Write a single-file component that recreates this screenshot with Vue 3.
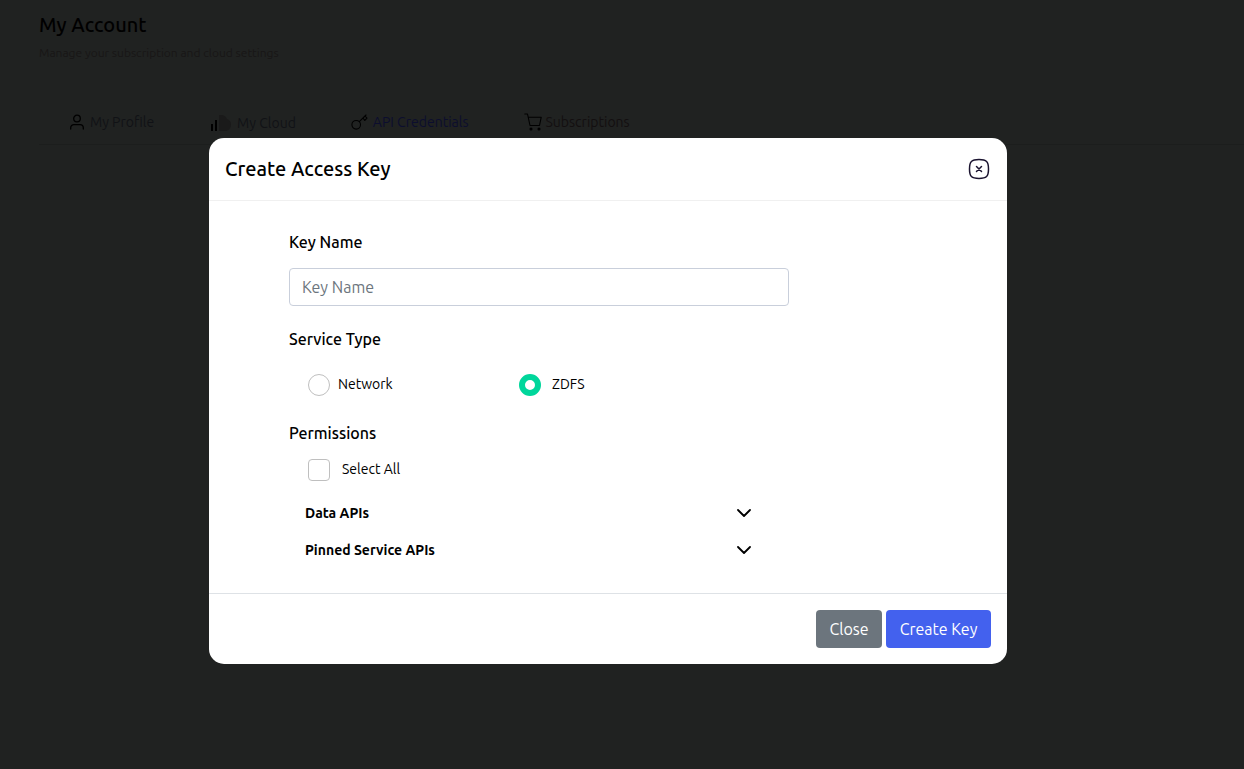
<script setup>
import { ref } from 'vue'

const tabs = [
  { id: 'profile', label: 'My Profile' },
  { id: 'cloud', label: 'My Cloud' },
  { id: 'api', label: 'API Credentials' },
  { id: 'subs', label: 'Subscriptions' },
]
const groups = ['Data APIs', 'Pinned Service APIs']
const keyName = ref('')
const service = ref('zdfs')
const selectAll = ref(false)
</script>

<template>
  <div class="page">
    <header class="intro">
      <h1>My Account</h1>
      <p>Manage your subscription and cloud settings</p>
    </header>
    <nav class="tabs">
      <a v-for="tab in tabs" :key="tab.id" href="#" class="tab" :class="tab.id">
        <svg v-if="tab.id === 'profile'" width="16" height="16" viewBox="0 0 16 16" fill="none" stroke="currentColor" stroke-width="1.3" stroke-linecap="round">
          <circle cx="8" cy="4.5" r="3.3" />
          <path d="M1.7 15v-1.200a3.200 3.200 0 0 1 3.200-3.200h6.200a3.200 3.200 0 0 1 3.200 3.200V15" />
        </svg>
        <svg v-else-if="tab.id === 'cloud'" width="22" height="18" viewBox="0 0 22 18">
          <path d="M9 1c5-.5 7 1.500 8 4 3 1 4.500 3.500 4 6.500S18.500 17 15 17H9z" fill="#1a1a1a" />
          <path d="M1 10h2v7H1zM5 6h2v11H5z" fill="currentColor" />
        </svg>
        <svg v-else-if="tab.id === 'api'" width="17" height="16" viewBox="0 0 17 16" fill="none" stroke="currentColor" stroke-width="1.1" stroke-linecap="round" stroke-linejoin="round">
          <circle cx="5.200" cy="10.800" r="4.300" />
          <path d="M8.300 7.700 15 1M12 4l1.700 2.500L16 4.200 14 2" />
        </svg>
        <svg v-else width="18" height="18" viewBox="0 0 18 18" fill="none" stroke="currentColor" stroke-width="1.1" stroke-linecap="round" stroke-linejoin="round">
          <path d="M.8 1h2.700L6 12.500h9.500l1.700-8.200H4.300" />
          <circle cx="7" cy="16" r="1" fill="currentColor" />
          <circle cx="15" cy="16" r="1" fill="currentColor" />
        </svg>
        <span>{{ tab.label }}</span>
      </a>
    </nav>

    <div class="overlay">
      <form class="modal" role="dialog" aria-labelledby="dialog-title" @submit.prevent>
        <div class="head">
          <h2 id="dialog-title">Create Access Key</h2>
          <button type="button" class="dismiss" aria-label="Close dialog">
            <svg width="22" height="22" viewBox="0 0 22 22" fill="none" stroke="#1b1430" stroke-width="1.5" stroke-linecap="round">
              <path d="M11 1.500c7.500 0 9.500 2 9.500 9.500s-2 9.500-9.500 9.500-9.500-2-9.500-9.500 2-9.500 9.500-9.500z" />
              <path d="m8.500 8.500 5 5m0-5-5 5" />
            </svg>
          </button>
        </div>

        <div class="body">
          <label class="title" for="key-name">Key Name</label>
          <input id="key-name" v-model="keyName" class="field" type="text" placeholder="Key Name" />

          <fieldset class="service">
            <legend class="title">Service Type</legend>
            <div class="options">
              <div class="option">
                <input id="network" v-model="service" type="radio" name="service" value="network" />
                <label for="network">Network</label>
              </div>
              <div class="option wide">
                <input id="zdfs" v-model="service" type="radio" name="service" value="zdfs" />
                <label for="zdfs">ZDFS</label>
              </div>
            </div>
          </fieldset>

          <fieldset class="permissions">
            <legend class="title">Permissions</legend>
            <div class="option all">
              <input id="select-all" v-model="selectAll" type="checkbox" />
              <label for="select-all">Select All</label>
            </div>
            <button v-for="group in groups" :key="group" type="button" class="group">
              <span>{{ group }}</span>
              <svg width="14" height="8" viewBox="0 0 14 8" fill="none" stroke="#000" stroke-width="1.800" stroke-linecap="round" stroke-linejoin="round">
                <path d="m1 1 6 6 6-6" />
              </svg>
            </button>
          </fieldset>
        </div>

        <div class="foot">
          <button type="button" class="btn">Close</button>
          <button type="submit" class="btn primary">Create Key</button>
        </div>
      </form>
    </div>
  </div>
</template>

<style>
body {
  background: #202221;
}
</style>

<style scoped>
.page,
.page * {
  box-sizing: border-box;
}
.page {
  min-height: 100vh;
  background: #202221;
  font-family: Ubuntu, "Noto Sans", sans-serif;
  font-size: 14px;
  color: #000;
}
h1,
h2,
p {
  margin: 0;
}
h1,
h2 {
  font-size: 20px;
  line-height: 30px;
  font-weight: 500;
}
.intro {
  padding: 10px 39px 0;
}
.intro p {
  margin-top: 3px;
  font-size: 12px;
  line-height: 20px;
  color: #181616;
}
.tabs {
  display: flex;
  height: 45px;
  margin: 37px 0 0 39px;
  padding-left: 30px;
  border-bottom: 1px solid #1c1e1d;
}
.tab {
  display: flex;
  align-items: center;
  gap: 5px;
  height: 44px;
  color: #000;
  text-decoration: none;
}
.tab span {
  color: #111216;
}
.tab.cloud,
.tab.subs {
  margin-left: 56px;
}
.tab.api {
  margin-left: 55px;
}
.tab.api span {
  color: #0c0e2e;
}
.tab.cloud {
  height: 46px;
}
.tab.subs {
  gap: 3px;
}
.tab.subs span {
  color: #130f10;
}
.overlay {
  position: absolute;
  inset: 0;
  display: flex;
  justify-content: center;
  align-items: flex-start;
  padding: 138px 28px 24px 0;
}
.modal {
  width: 100%;
  max-width: 798px;
  background: #fff;
  border-radius: 15px;
}
.head {
  display: flex;
  align-items: center;
  justify-content: space-between;
  padding: 16px;
  border-bottom: 1px solid #f0f0f0;
}
button,
input {
  font-family: inherit;
}
button {
  cursor: pointer;
}
.dismiss {
  display: flex;
  padding: 0;
  margin-right: 1px;
  border: 0;
  background: none;
}
.body {
  padding: 29px 80px 25px;
}
.title {
  display: block;
  padding: 0;
  font-size: 16px;
  line-height: 24px;
  font-weight: 500;
}
.field {
  display: block;
  width: 100%;
  max-width: 500px;
  height: 38px;
  margin-top: 14px;
  padding: 0 12px;
  border: 1px solid #c9cfdb;
  border-radius: 4px;
  font-size: 16px;
  color: #212529;
}
.field::placeholder {
  color: #6c757d;
  opacity: 1;
}
fieldset {
  min-width: 0;
  margin: 0;
  padding: 0;
  border: 0;
}
.service {
  margin-top: 21px;
}
.options {
  display: grid;
  grid-template-columns: 211px 1fr;
  margin: 23px 0 0 19px;
}
.option {
  display: flex;
  align-items: flex-start;
  gap: 8px;
  height: 22px;
  line-height: 20px;
}
.wide {
  gap: 11px;
}
.option input {
  appearance: none;
  width: 22px;
  height: 22px;
  margin: 0;
  border: 1px solid #bfbfbf;
  border-radius: 50%;
  background: #fff;
}
.option input[type='radio']:checked {
  border: 6px solid #00d69b;
}
.option input[type='checkbox'] {
  border-radius: 4px;
}
.permissions {
  margin-top: 25px;
}
.all {
  gap: 12px;
  margin: 14px 0 13px 19px;
}
.group {
  display: flex;
  align-items: center;
  justify-content: space-between;
  width: 100%;
  max-width: 462px;
  height: 37px;
  padding: 0 0 0 16px;
  border: 0;
  background: none;
  font-size: 14px;
  font-weight: 700;
  color: #000;
}
.foot {
  display: flex;
  justify-content: flex-end;
  gap: 4px;
  padding: 16px;
  border-top: 1px solid #dee2e6;
}
.btn {
  min-width: 66px;
  height: 38px;
  padding: 0 13px;
  border: 0;
  border-radius: 4px;
  background: #6c757d;
  color: #fff;
  font-size: 16px;
}
.primary {
  min-width: 105px;
  background: #4361ee;
}
</style>
